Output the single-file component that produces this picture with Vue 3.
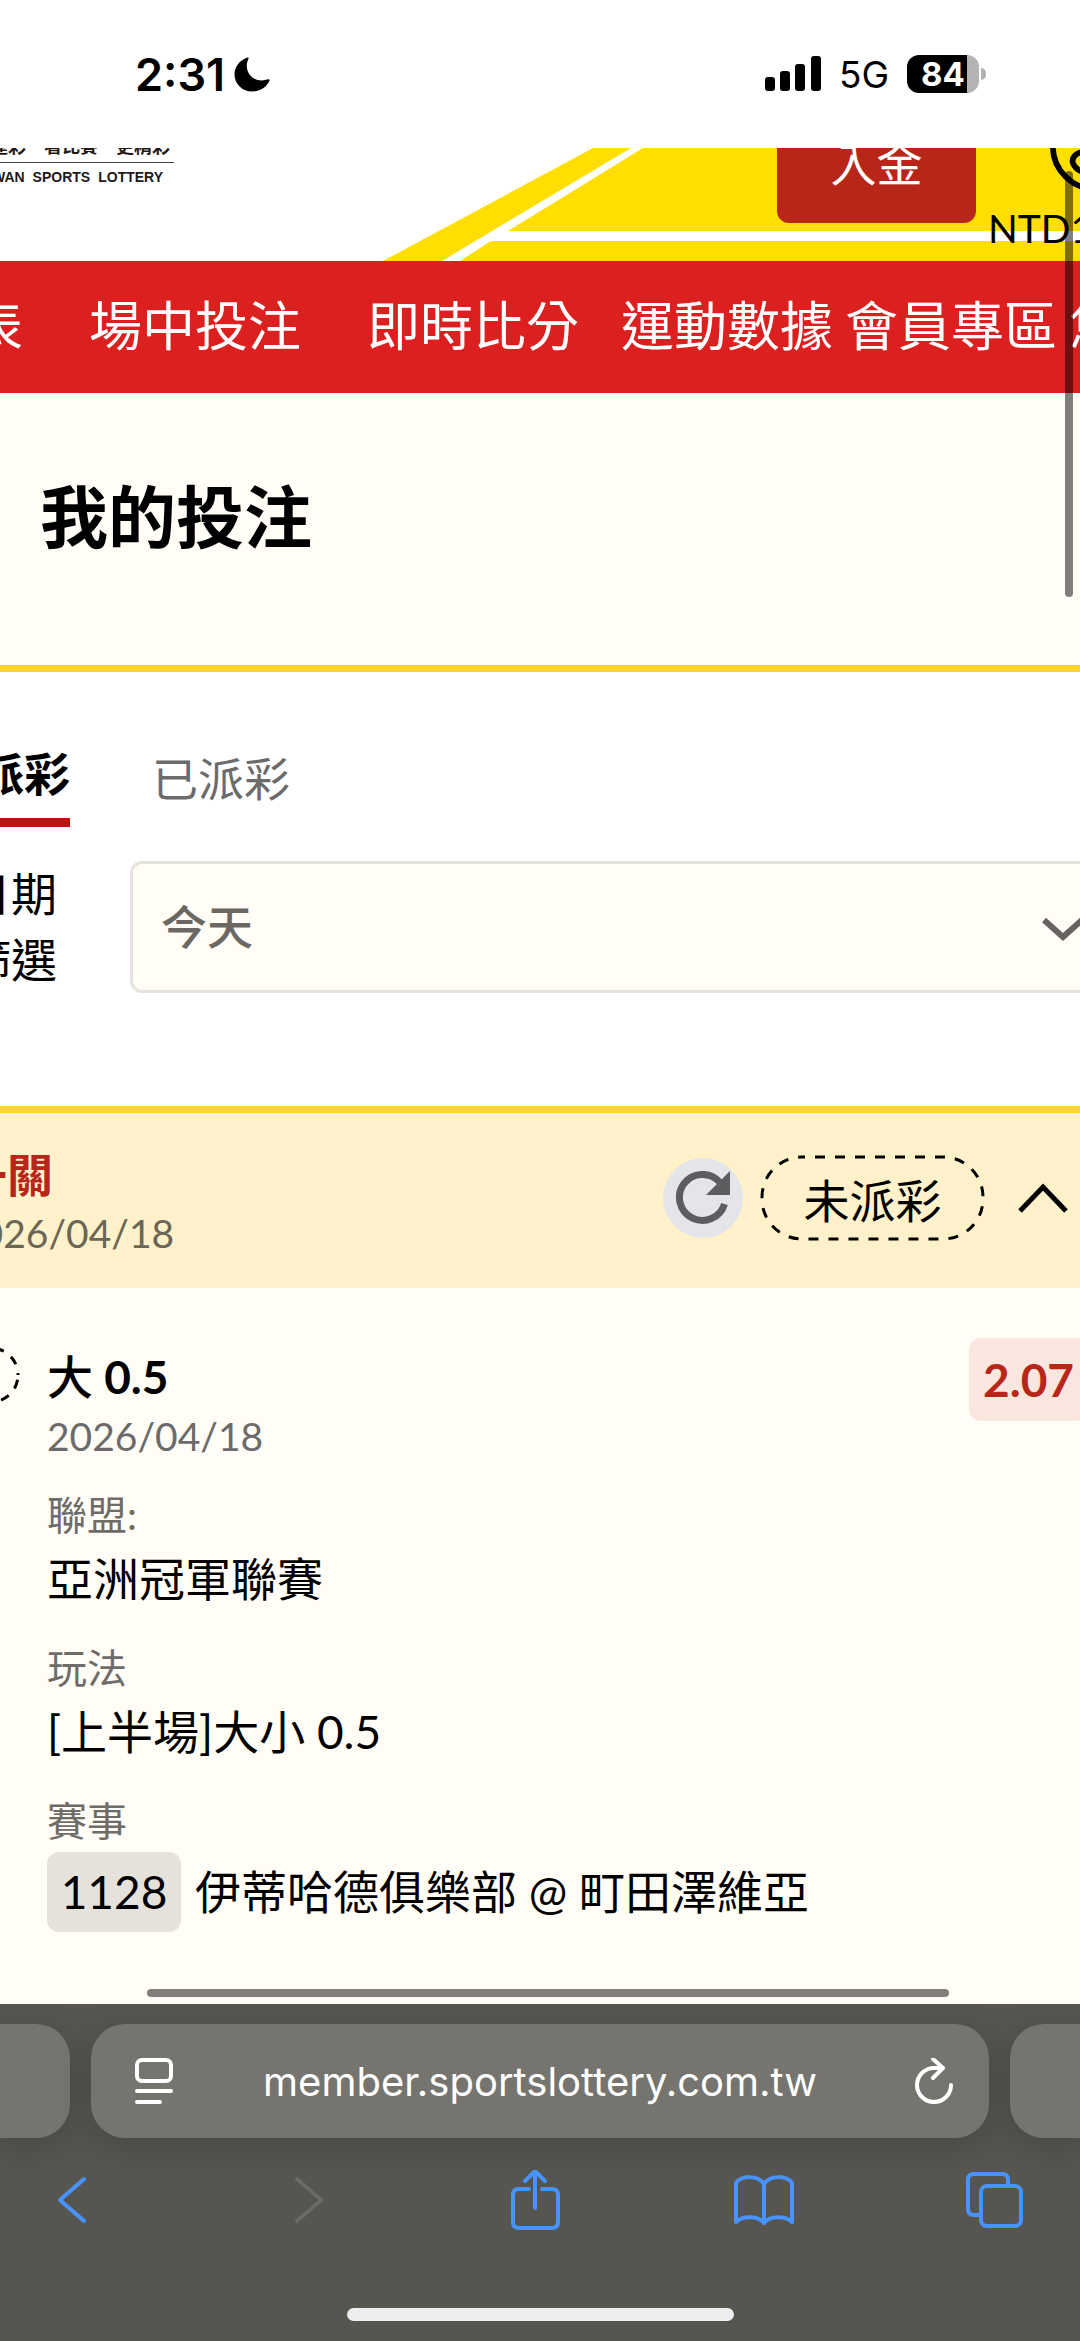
<template>
  <div class="phone">
    <header class="status-bar">
      <div class="status-time">
        <span>2:31</span>
        <svg class="moon" viewBox="0 0 36 35" aria-hidden="true">
          <path d="M13.500 0.500C5.500 3 0.500 10 0.500 17.500C0.500 27 8.500 34.500 18 34.500C26 34.500 33 30 35.500 23.500C35.800 22.500 35 22 34 22.300C32 23 29.800 23.400 27.500 23.400C19 23.400 12.800 17 12.800 8.800C12.800 6.200 13.500 3.800 14.500 1.700C14.900 0.800 14.500 0.200 13.500 0.500Z" />
        </svg>
      </div>
      <div class="status-icons">
        <svg class="signal" viewBox="0 0 56 36" aria-hidden="true">
          <rect x="0" y="21" width="10" height="14" rx="3" />
          <rect x="15" y="15" width="10" height="20" rx="3" />
          <rect x="30" y="8" width="10" height="27" rx="3" />
          <rect x="46" y="0" width="10" height="35" rx="3" />
        </svg>
        <span class="network">5G</span>
        <div class="battery"><span>84</span></div>
      </div>
    </header>

    <main class="site">
      <div class="banner">
        <svg class="banner-art" viewBox="0 0 1080 113" preserveAspectRatio="none" aria-hidden="true">
          <path d="M383 113L593 0H631L442 113Z" />
          <path d="M508 83L643 0H1080V83Z" />
          <path d="M460 113L491 93H1080V113Z" />
        </svg>
        <div class="logo">
          <div class="logo-slogan"><span>樂運彩</span><span>看比賽</span><span>更精彩</span></div>
          <div class="logo-name"><span>TAIWAN</span><span>SPORTS</span><span>LOTTERY</span></div>
        </div>
        <button class="deposit" type="button">入金</button>
        <div class="wallet">
          <svg class="coin" viewBox="0 0 100 100" aria-hidden="true">
            <circle cx="50" cy="50" r="45" />
            <path d="M66 34C62 24 38 22 36 36C35 52 66 48 66 64C65 80 32 84 26 68C24 62 30 56 38 56M50 16V84" />
          </svg>
          <span>NTD1,250</span>
        </div>
      </div>

      <nav class="site-nav">
        <a v-for="item in navItems" :key="item.text" href="#" :class="item.size">{{ item.text }}</a>
      </nav>

      <section class="page-title">
        <h1>我的投注</h1>
      </section>

      <section class="filters">
        <div class="tabs">
          <button class="tab tab-active" type="button">未派彩</button>
          <button class="tab" type="button">已派彩</button>
        </div>
        <div class="filter-row">
          <label for="date-filter">日期<br />篩選</label>
          <div class="select-box">
            <select id="date-filter" v-model="range">
              <option>今天</option>
              <option>昨天</option>
            </select>
            <svg class="select-arrow" viewBox="0 0 42 24" aria-hidden="true">
              <path d="M2 3L21 20L40 3" />
            </svg>
          </div>
        </div>
      </section>

      <section class="bet">
        <div class="bet-head">
          <div class="bet-info">
            <strong>單一關</strong>
            <span>2026/04/18</span>
          </div>
          <button class="refresh" type="button" aria-label="重新整理">
            <svg viewBox="0 0 54 54" aria-hidden="true">
              <path class="refresh-arc" d="M48.500 33A23 23 0 1 1 43.500 11" />
              <path class="refresh-tip" d="M54 0V24H30Z" />
            </svg>
          </button>
          <div class="pill">
            <svg viewBox="0 0 225 86" aria-hidden="true">
              <rect x="2" y="2" width="221" height="82" rx="40" />
            </svg>
            <span>未派彩</span>
          </div>
          <button class="collapse" type="button" aria-label="收合">
            <svg viewBox="0 0 50 30" aria-hidden="true"><path d="M2 28L25 4L48 28" /></svg>
          </button>
        </div>

        <div class="bet-body">
          <svg class="status-dot" viewBox="0 0 58 58" aria-hidden="true">
            <circle cx="29" cy="29" r="27" />
          </svg>
          <div class="leg">
            <h2><span>大</span> 0.5</h2>
            <div class="leg-date">2026/04/18</div>
            <dl>
              <div v-for="row in details" :key="row.label">
                <dt>{{ row.label }}</dt>
                <dd>{{ row.value }}</dd>
              </div>
              <div>
                <dt>賽事</dt>
                <dd class="match"><span class="match-no">1128</span>伊蒂哈德俱樂部 @ 町田澤維亞</dd>
              </div>
            </dl>
          </div>
          <div class="odds">2.07</div>
        </div>
      </section>

      <div class="scroll-y"></div>
      <div class="scroll-x"></div>
    </main>

    <footer class="toolbar">
      <div class="address-row">
        <div class="side-tab"></div>
        <div class="address">
          <button type="button" aria-label="頁面選單">
            <svg viewBox="0 0 38 46" aria-hidden="true">
              <rect x="2" y="2" width="34" height="21" rx="5" />
              <path d="M2 33H36M2 44H25" />
            </svg>
          </button>
          <input v-model="url" type="text" aria-label="網址" />
          <button type="button" aria-label="重新載入">
            <svg viewBox="0 0 38 46" aria-hidden="true">
              <path d="M36 27A17 17 0 1 1 19 10H27M18 1L28 10L18 20" />
            </svg>
          </button>
        </div>
        <div class="side-tab"></div>
      </div>
      <div class="tool-row">
        <button type="button" aria-label="上一頁">
          <svg viewBox="0 0 60 60"><path d="M42 9L18 30L42 51" /></svg>
        </button>
        <button type="button" class="disabled" aria-label="下一頁" disabled>
          <svg viewBox="0 0 60 60"><path d="M24 9L48 30L24 51" /></svg>
        </button>
        <button type="button" aria-label="分享">
          <svg viewBox="0 0 60 60">
            <path d="M26 19H16Q10 19 10 25V52Q10 58 16 58H49Q55 58 55 52V25Q55 19 49 19H39M32 38V2M22 11L32 1L42 11" />
          </svg>
        </button>
        <button type="button" aria-label="書籤">
          <svg viewBox="0 0 60 60">
            <path d="M30 14C24 5 8 5 2 13V52C8 46 24 45 30 53C36 45 52 46 58 52V13C52 5 36 5 30 14V53" />
          </svg>
        </button>
        <button type="button" aria-label="分頁">
          <svg viewBox="0 0 60 60">
            <rect x="17" y="16" width="40" height="40" rx="6" />
            <path d="M17 45H10Q4 45 4 39V10Q4 4 10 4H38Q44 4 44 10V16" />
          </svg>
        </button>
      </div>
      <div class="home-indicator"></div>
    </footer>
  </div>
</template>

<script setup>
import { ref } from 'vue'

const range = ref('今天')
const url = ref('member.sportslottery.com.tw')

const navItems = [
  { text: '賽程表', size: 'wide first' },
  { text: '場中投注', size: 'wide' },
  { text: '即時比分', size: 'medium' },
  { text: '運動數據', size: '' },
  { text: '會員專區', size: '' },
  { text: '您好', size: '' },
]

const details = [
  { label: '聯盟:', value: '亞洲冠軍聯賽' },
  { label: '玩法', value: '[上半場]大小 0.5' },
]
</script>

<style>
body {
  background: #fff;
}
</style>

<style scoped>
.phone {
  display: flex;
  flex-direction: column;
  min-height: 100vh;
  overflow: hidden;
  background: #fff;
  color: #000;
  font-family: Lato, "Noto Sans CJK TC", sans-serif;
  font-size: 46px;
}

.phone * {
  box-sizing: border-box;
}

button,
input,
select {
  padding: 0;
  border: 0;
  background: none;
  color: inherit;
  font: inherit;
}

svg {
  display: block;
}

/* status bar */
.status-bar {
  display: flex;
  flex: none;
  align-items: center;
  justify-content: space-between;
  height: 148px;
  padding: 0 101px 0 135px;
  font-family: Inter, sans-serif;
}

.status-time,
.status-icons {
  display: flex;
  align-items: center;
}

.status-time {
  gap: 9px;
  font-size: 45px;
  font-weight: 600;
}

.moon {
  width: 36px;
  height: 35px;
}

.signal {
  width: 56px;
  height: 36px;
}

.network {
  margin: 0 18px;
  font-size: 37px;
}

.battery {
  position: relative;
  display: flex;
  align-items: center;
  justify-content: center;
  width: 72px;
  height: 38px;
  border-radius: 12px;
  background: linear-gradient(to right, #000 84%, #b3b3b3 84%);
  color: #fff;
  font-size: 33px;
  font-weight: 700;
}

.battery::after {
  position: absolute;
  right: -7px;
  width: 5px;
  height: 12px;
  border-radius: 0 6px 6px 0;
  background: #b3b3b3;
  content: "";
}

/* site */
.site {
  position: relative;
  display: flex;
  flex: 1;
  flex-direction: column;
  overflow: hidden;
}

.banner {
  position: relative;
  display: flex;
  flex: none;
  align-items: flex-end;
  height: 113px;
  overflow: hidden;
}

.banner-art {
  position: absolute;
  inset: 0;
  width: 100%;
  height: 113px;
  fill: #ffde00;
}

.logo {
  display: flex;
  flex-direction: column;
  align-items: flex-end;
  width: 174px;
  padding-bottom: 76px;
  color: #231815;
  white-space: nowrap;
}

.logo-slogan {
  display: flex;
  gap: 18px;
  align-self: stretch;
  justify-content: flex-end;
  padding-right: 4px;
  border-bottom: 1px solid #444;
  font-size: 18px;
  font-weight: 700;
  line-height: 32px;
}

.logo-slogan span {
  flex: none;
}

.logo-name {
  display: flex;
  gap: 8px;
  padding: 6px 11px 0 0;
  font-family: "Liberation Sans", sans-serif;
  font-size: 14px;
  font-weight: 700;
  line-height: 16px;
}

.deposit {
  position: relative;
  width: 199px;
  height: 120px;
  margin: 0 0 38px auto;
  padding-bottom: 4px;
  border-radius: 12px;
  background: #b82619;
  color: #fff;
}

.wallet {
  position: relative;
  display: flex;
  flex: none;
  flex-direction: column;
  width: 104px;
  padding-left: 12px;
  font-size: 39px;
  line-height: 60px;
  white-space: nowrap;
}

.coin {
  flex: none;
  width: 96px;
  height: 96px;
  margin-left: 60px;
  fill: none;
  stroke: #000;
  stroke-width: 6;
}

.wallet span {
  margin: 4px 0 3px;
}

.site-nav {
  display: flex;
  flex: none;
  gap: 12px;
  align-items: center;
  height: 132px;
  padding-bottom: 8px;
  overflow: hidden;
  background: #dc1f1f;
  white-space: nowrap;
}

.site-nav a {
  flex: none;
  color: #fff;
  font-size: 53px;
  text-decoration: none;
}

.site-nav .first {
  margin-left: -136px;
}

.site-nav .wide {
  padding-right: 54px;
}

.site-nav .medium {
  padding-right: 30px;
}

.page-title {
  display: flex;
  align-items: center;
  height: 279px;
  padding: 0 40px 32px;
  border-bottom: 7px solid #ffd52b;
  background: #fffdf6;
}

.page-title h1 {
  margin: 0;
  font-size: 68px;
  font-weight: 700;
}

.filters {
  padding: 66px 0 113px;
}

.tabs {
  display: flex;
  gap: 82px;
  align-items: flex-start;
  margin-left: -68px;
}

.tab {
  height: 89px;
  padding-bottom: 14px;
  color: #6b6b6b;
}

.tab-active {
  border-bottom: 9px solid #bf1111;
  color: #000;
  font-weight: 700;
}

.filter-row {
  display: flex;
  align-items: center;
  padding-top: 34px;
}

.filter-row label {
  width: 92px;
  margin-left: -35px;
  line-height: 66px;
}

.select-box {
  position: relative;
  flex: 1;
  margin: 0 -46px 0 73px;
}

.select-box select {
  display: block;
  width: 100%;
  height: 132px;
  padding: 0 28px 2px;
  border: 3px solid #e6e3dd;
  border-radius: 12px;
  background: #fffdf6;
  color: #6b6864;
  font-weight: 500;
  appearance: none;
}

.select-arrow {
  position: absolute;
  top: 56px;
  right: 42px;
  width: 42px;
  height: 24px;
  fill: none;
  stroke: #666461;
  stroke-width: 6;
}

/* bet */
.bet {
  display: flex;
  flex: 1;
  flex-direction: column;
  border-top: 7px solid #ffd52b;
  background: #fffdf6;
}

.bet-head {
  display: flex;
  align-items: center;
  height: 175px;
  padding: 0 12px 6px 0;
  background: #fff2cb;
}

.bet-info {
  display: flex;
  flex: 1;
  flex-direction: column;
  margin-left: -42px;
  padding-top: 6px;
}

.bet-info strong {
  margin-left: -43px;
  color: #b8261a;
  line-height: 64px;
}

.bet-info span {
  color: #6b6655;
  font-size: 39px;
  line-height: 52px;
}

.refresh {
  display: flex;
  align-items: center;
  justify-content: center;
  width: 80px;
  height: 80px;
  border-radius: 50%;
  background: #e3e5e8;
}

.refresh svg {
  width: 54px;
  height: 54px;
}

.refresh-arc {
  fill: none;
  stroke: #5b5d5f;
  stroke-width: 7;
}

.refresh-tip {
  fill: #5b5d5f;
}

.pill {
  position: relative;
  display: flex;
  align-items: center;
  justify-content: center;
  width: 225px;
  height: 86px;
  margin: 0 33px 0 17px;
}

.pill svg {
  position: absolute;
  inset: 0;
  fill: none;
  stroke: #000;
  stroke-dasharray: 10 10;
  stroke-dashoffset: 7;
  stroke-width: 3;
}

.collapse svg {
  width: 50px;
  height: 30px;
  fill: none;
  stroke: #000;
  stroke-width: 5;
}

.bet-body {
  display: flex;
  align-items: flex-start;
  padding-top: 50px;
}

.status-dot {
  flex: none;
  width: 58px;
  height: 58px;
  margin: 8px 27px 0 -38px;
  fill: none;
  stroke: #000;
  stroke-dasharray: 9 9;
  stroke-dashoffset: -5;
  stroke-width: 3;
}

.leg {
  flex: 1;
  padding-top: 6px;
}

.leg h2 {
  margin: 0;
  font-size: 46px;
  font-weight: 700;
  line-height: 66px;
}

.leg h2 span {
  font-weight: 500;
}

.leg-date {
  color: #6b6b6b;
  font-size: 39px;
  line-height: 52px;
}

.leg dl {
  display: flex;
  flex-direction: column;
  gap: 25px;
  margin: 25px 0 0;
}

.leg dt {
  color: #6e6c69;
  font-size: 40px;
  line-height: 56px;
}

.leg dd {
  margin: 0;
  line-height: 72px;
}

.leg .match {
  display: flex;
  gap: 14px;
  margin-top: 3px;
  line-height: 80px;
}

.match-no {
  width: 134px;
  border-radius: 12px;
  background: #e5e2dc;
  text-align: center;
}

.odds {
  margin-right: -8px;
  padding: 0 14px;
  border-radius: 12px;
  background: #f8e6df;
  color: #b8261a;
  font-weight: 700;
  line-height: 83px;
}

.scroll-y,
.scroll-x {
  position: absolute;
  border-radius: 4px;
  background: rgba(0, 0, 0, 0.5);
}

.scroll-y {
  top: 23px;
  right: 7px;
  width: 8px;
  height: 426px;
}

.scroll-x {
  right: 131px;
  bottom: 7px;
  left: 147px;
  height: 8px;
}

/* browser toolbar */
.toolbar {
  flex: none;
  overflow: hidden;
  padding: 20px 0;
  background: #575550;
}

.address-row {
  display: flex;
  gap: 21px;
  height: 114px;
}

.side-tab,
.address {
  background: #75746f;
  box-shadow: 0 8px 30px 4px rgba(0, 0, 0, 0.14);
}

.side-tab {
  width: 70px;
  border-radius: 0 34px 34px 0;
}

.side-tab:last-child {
  border-radius: 34px 0 0 34px;
}

.address {
  display: flex;
  flex: 1;
  align-items: center;
  padding: 0 36px 0 44px;
  border-radius: 34px;
  color: #fff;
}

.address svg {
  width: 38px;
  height: 46px;
  fill: none;
  stroke: #fff;
  stroke-linecap: round;
  stroke-linejoin: round;
  stroke-width: 4;
}

.address input {
  flex: 1;
  min-width: 0;
  padding-right: 8px;
  font-family: Inter, sans-serif;
  font-size: 40px;
  text-align: center;
}

.tool-row {
  display: flex;
  align-items: center;
  justify-content: space-between;
  height: 124px;
  padding: 0 56px 0 42px;
}

.tool-row button {
  width: 60px;
  height: 60px;
}

.tool-row svg {
  width: 60px;
  height: 60px;
  fill: none;
  stroke: #4793ff;
  stroke-linecap: round;
  stroke-linejoin: round;
  stroke-width: 4;
}

.tool-row .disabled svg {
  stroke: #6b6a66;
}

.home-indicator {
  width: 387px;
  height: 13px;
  margin: 46px auto 0;
  border-radius: 7px;
  background: #eee;
}
</style>
